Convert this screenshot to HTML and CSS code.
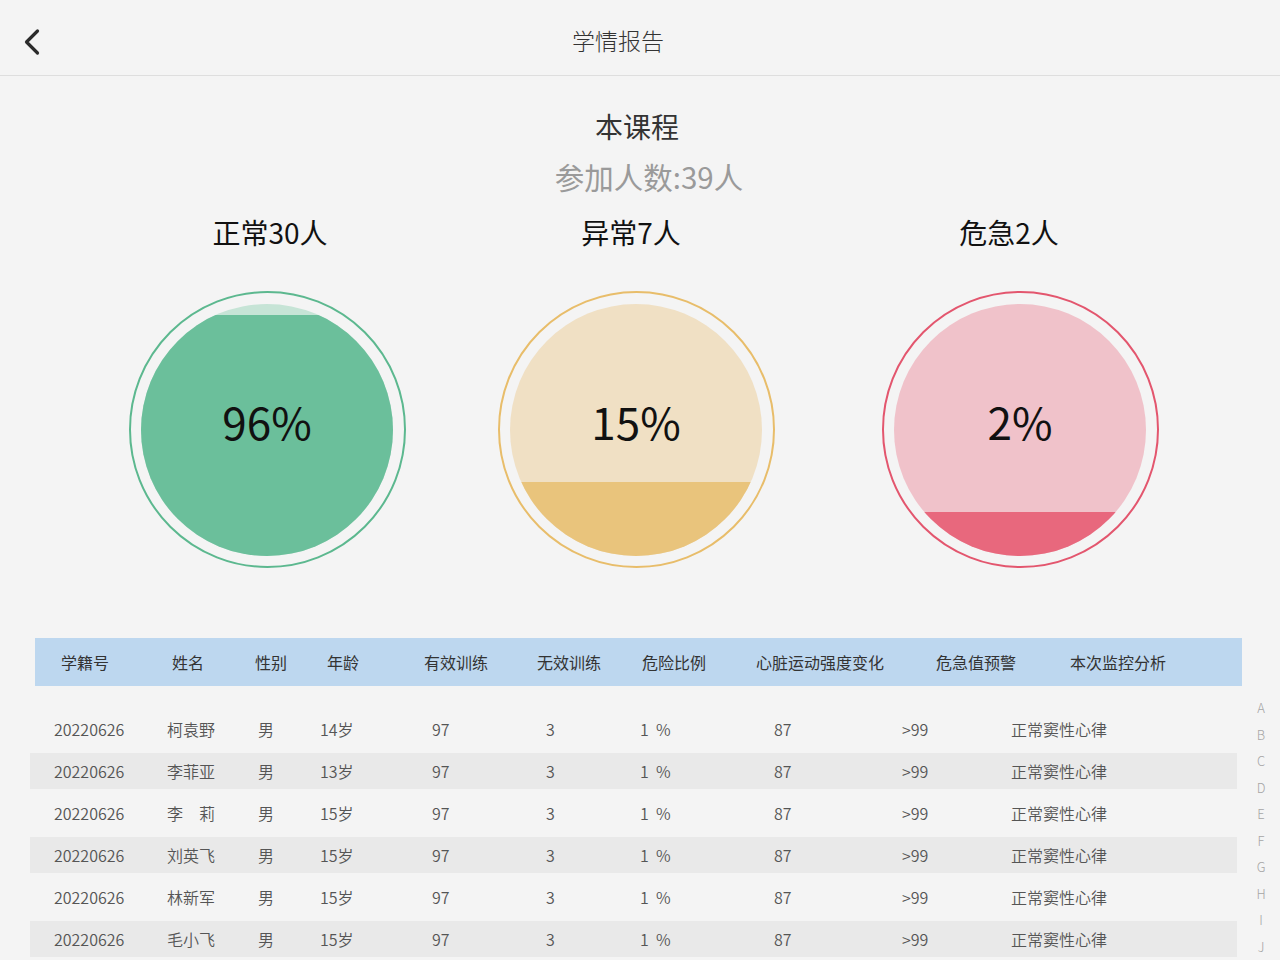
FILE: index.html
```html
<!DOCTYPE html>
<html lang="zh-CN">
<head>
  <meta charset="UTF-8" />
  <meta name="viewport" content="width=device-width, initial-scale=1.0"/>
  <title>学情报告</title>
  <link rel="stylesheet" href="styles.css">
</head>
<body>

  <div class="topbar">
    <button class="back-btn" aria-label="返回">
      <svg width="20" height="28" viewBox="0 0 20 28">
        <path d="M15.5 3 L4.5 14 L15.5 25" fill="none" stroke="#2b2b2b" stroke-width="3.2" stroke-linecap="round" stroke-linejoin="round"/>
      </svg>
    </button>
    <h1 class="page-title">学情报告</h1>
    <div class="topbar-spacer"></div>
  </div>

  <div class="summary">
    <h2 class="course-name">本课程</h2>
    <p class="course-count">参加人数:39人</p>
  </div>

  <div class="gauges">
    <div class="gauge-col">
      <h3 class="gauge-label">正常30人</h3>
      <div class="gauge normal">
        <div class="gauge-inner">
          <div class="gauge-fill" style="height: 95.6%"></div>
          <span class="gauge-value">96%</span>
        </div>
      </div>
    </div>
    <div class="gauge-col">
      <h3 class="gauge-label">异常7人</h3>
      <div class="gauge abnormal">
        <div class="gauge-inner">
          <div class="gauge-fill" style="height: 29.2%"></div>
          <span class="gauge-value">15%</span>
        </div>
      </div>
    </div>
    <div class="gauge-col">
      <h3 class="gauge-label">危急2人</h3>
      <div class="gauge danger">
        <div class="gauge-inner">
          <div class="gauge-fill" style="height: 17.2%"></div>
          <span class="gauge-value">2%</span>
        </div>
      </div>
    </div>
  </div>

  <div class="report">
    <div class="report-table">
      <div class="thead">
        <span>学籍号</span>
        <span>姓名</span>
        <span>性别</span>
        <span>年龄</span>
        <span>有效训练</span>
        <span>无效训练</span>
        <span>危险比例</span>
        <span>心脏运动强度变化</span>
        <span>危急值预警</span>
        <span>本次监控分析</span>
      </div>
      <div class="tbody"></div>
    </div>

    <ul class="alpha-index">
      <li>A</li><li>B</li><li>C</li><li>D</li><li>E</li>
      <li>F</li><li>G</li><li>H</li><li>I</li><li>J</li>
    </ul>
  </div>

  <script>
    const students = [
      { id: '20220626', name: '柯袁野', sex: '男', age: '14岁' },
      { id: '20220626', name: '李菲亚', sex: '男', age: '13岁' },
      { id: '20220626', name: '李　莉', sex: '男', age: '15岁' },
      { id: '20220626', name: '刘英飞', sex: '男', age: '15岁' },
      { id: '20220626', name: '林新军', sex: '男', age: '15岁' },
      { id: '20220626', name: '毛小飞', sex: '男', age: '15岁' }
    ];

    const tbody = document.querySelector('.tbody');

    students.forEach((s, i) => {
      const row = document.createElement('div');
      row.className = `trow ${i % 2 === 1 ? 'striped' : ''}`;
      row.innerHTML = `
        <span>${s.id}</span>
        <span>${s.name}</span>
        <span>${s.sex}</span>
        <span>${s.age}</span>
        <span>97</span>
        <span>3</span>
        <span>1&nbsp;&nbsp;%</span>
        <span>87</span>
        <span>&gt;99</span>
        <span>正常窦性心律</span>
      `;
      tbody.appendChild(row);
    });
  </script>

</body>
</html>
```

FILE: styles.css
```css
/* Base styles */
* {
  margin: 0;
  padding: 0;
  box-sizing: border-box;
}

body {
  font-family: "Noto Sans CJK SC", "Noto Sans", sans-serif;
  font-weight: 350;
  background: #f4f4f4;
  color: #333;
  width: 1280px;
  height: 960px;
  overflow: hidden;
}

/* Top bar */
.topbar {
  display: flex;
  align-items: center;
  height: 76px;
  border-bottom: 1px solid #dedede;
}

.back-btn {
  width: 60px;
  height: 100%;
  padding-left: 22px;
  padding-top: 8px;
  background: none;
  border: none;
  cursor: pointer;
  display: flex;
  align-items: center;
}

.page-title {
  flex: 1;
  text-align: center;
  font-size: 23px;
  font-weight: 300;
  color: #333;
  padding-top: 4px;
}

.topbar-spacer {
  width: 104px;
}

/* Summary */
.summary {
  text-align: center;
  padding-top: 30px;
}

.course-name {
  font-size: 28px;
  font-weight: 400;
  line-height: 40px;
  color: #333;
  padding-right: 6px;
}

.course-count {
  font-size: 29.5px;
  font-weight: 400;
  line-height: 40px;
  margin-top: 10px;
  color: #9a9a9a;
  padding-left: 18px;
}

/* Gauges */
.gauges {
  display: grid;
  grid-template-columns: 370px 368px 400px;
  padding-left: 82px;
  margin-top: 16px;
}

.gauge-col {
  display: flex;
  flex-direction: column;
  align-items: center;
}

.gauge-label {
  font-size: 28px;
  font-weight: 400;
  line-height: 40px;
  color: #111;
  margin-bottom: 39px;
}

.gauge-col:nth-child(1) .gauge-label {
  margin-left: 6px;
}

.gauge-col:nth-child(2) .gauge-label {
  margin-right: 10px;
}

.gauge-col:nth-child(3) .gauge-label {
  margin-right: 22px;
}

.gauge {
  width: 277px;
  height: 277px;
  border-radius: 50%;
  border: 2.5px solid;
  padding: 10.5px;
}

.gauge-inner {
  position: relative;
  width: 100%;
  height: 100%;
  border-radius: 50%;
  overflow: hidden;
  display: flex;
  align-items: center;
  justify-content: center;
}

.gauge-fill {
  position: absolute;
  left: 0;
  right: 0;
  bottom: 0;
}

.gauge-value {
  position: relative;
  font-size: 44px;
  font-weight: 400;
  color: #111;
  margin-top: -18px;
}

.gauge.normal { border-color: #5cb88f; }
.gauge.normal .gauge-inner { background: #c6e4d6; }
.gauge.normal .gauge-fill { background: #6bbf9b; }

.gauge.abnormal { border-color: #e8bd6a; }
.gauge.abnormal .gauge-inner { background: #f0e0c4; }
.gauge.abnormal .gauge-fill { background: #e9c47c; }

.gauge.danger { border-color: #e3566e; }
.gauge.danger .gauge-inner { background: #f0c2ca; }
.gauge.danger .gauge-fill { background: #e8687d; }

/* Table */
.report {
  display: flex;
  margin-top: 70px;
}

.report-table {
  margin-left: 30px;
  width: 1212px;
}

.thead {
  display: grid;
  grid-template-columns: 111px 83px 72px 97px 113px 105px 114px 180px 134px 1fr;
  align-items: center;
  height: 48px;
  margin-left: 5px;
  padding-left: 26px;
  background: #bdd7ef;
  font-size: 16px;
  font-weight: 400;
  color: #333;
}

.tbody {
  margin-top: 25px;
  width: 1207px;
}

.trow {
  display: grid;
  grid-template-columns: 113px 91px 62px 112px 114px 94px 134px 128px 109px 1fr;
  align-items: center;
  height: 36px;
  margin-bottom: 6px;
  padding-left: 24px;
  font-size: 16px;
  color: #555;
}

.trow.striped {
  background: #e9e9e9;
}

/* Alphabet index */
.alpha-index {
  list-style: none;
  width: 38px;
  padding-top: 57px;
  text-align: center;
}

.alpha-index li {
  font-size: 13px;
  font-weight: 300;
  line-height: 26.5px;
  color: #a5a5a5;
}
```
